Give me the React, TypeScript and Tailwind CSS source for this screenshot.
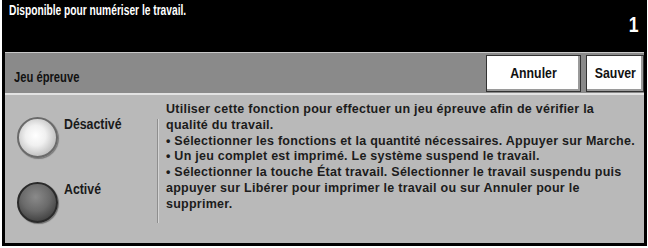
import React from "react";

const sans = "font-['Liberation_Sans',Arial,sans-serif]";

function Radio({ on, label }: { on: boolean; label: string }) {
  return (
    <div className="flex items-start gap-[6px]">
      <div
        className={
          on
            ? "w-[41px] h-[41px] rounded-full border-[2px] border-[#2a2a2a] bg-[radial-gradient(circle_at_45%_35%,#8a8a8a,#6a6a6a_45%,#3a3a3a_85%)] shadow-[1px_1px_1px_rgba(0,0,0,0.4)]"
            : "w-[41px] h-[41px] rounded-full border-[2px] border-[#6a6a6a] bg-[radial-gradient(circle_at_45%_45%,#ffffff,#f0f0f0_35%,#c4c4c4_70%,#8c8c8c)] shadow-[1px_1px_1px_rgba(0,0,0,0.35)]"
        }
      />
      <span className={`${sans} inline-block origin-left scale-x-[0.88] text-[14px] font-bold text-[#1a1a1a] leading-none`}>
        {label}
      </span>
    </div>
  );
}

function Btn({ label, w }: { label: string; w: string }) {
  return (
    <button
      className={`${w} h-[37px] bg-white border border-[#333] shadow-[inset_-2px_-2px_0_#9a9a9a,inset_2px_2px_0_#ffffff] ${sans} text-[14px] font-bold text-[#111]`}
    >
      <span className="inline-block scale-x-[0.88]">{label}</span>
    </button>
  );
}

export default function App() {
  return (
    <div className="w-[648px] h-[248px] bg-white">
      <div className="ml-[2px] w-[645px] h-[246px] flex flex-col border-l-[3px] border-r-[3px] border-b-[3px] border-black bg-black">
        <div className="h-[52px] flex justify-between px-[4px]">
          <span className={`${sans} inline-block origin-top-left scale-x-[0.73] text-white text-[14px] font-bold leading-none pt-[3px]`}>
            Disponible pour numériser le travail.
          </span>
          <span className={`${sans} inline-block origin-top-right scale-x-[0.8] text-white text-[22px] font-bold leading-none pt-[14px] pr-[2px]`}>
            1
          </span>
        </div>
        <div className="h-[1px] bg-[#c8c8c8]" />
        <div className="h-[40px] bg-[#8a8a8a] flex items-center justify-between pl-[9px]">
          <span className={`${sans} inline-block origin-left scale-x-[0.8] text-[14px] font-bold text-[#111] mt-[8px]`}>
            Jeu épreuve
          </span>
          <div className="flex gap-[5px] self-stretch items-center">
            <Btn label="Annuler" w="w-[95px]" />
            <Btn label="Sauver" w="w-[58px]" />
          </div>
        </div>
        <div className="h-[2px] bg-[#e2e2e2]" />
        <div className="flex-1 bg-[#b9b9b9] flex">
          <div className="w-[152px] flex flex-col gap-[24px] pl-[12px] pt-[22px]">
            <Radio on={false} label="Désactivé" />
            <Radio on={true} label="Activé" />
          </div>
          <div className="mt-[24px] h-[104px] w-[2px] border-l border-[#8e8e8e] bg-[#d4d4d4]" />
          <div className={`pl-[7px] pt-[7px] ${sans} text-[12.5px] tracking-[0.25px] font-bold leading-[15.8px] text-[#1c1c1c] whitespace-nowrap`}>
            Utiliser cette fonction pour effectuer un jeu épreuve afin de vérifier la
            <br />
            qualité du travail.
            <br />
            • Sélectionner les fonctions et la quantité nécessaires. Appuyer sur Marche.
            <br />
            • Un jeu complet est imprimé. Le système suspend le travail.
            <br />
            • Sélectionner la touche État travail. Sélectionner le travail suspendu puis
            <br />
            appuyer sur Libérer pour imprimer le travail ou sur Annuler pour le
            <br />
            supprimer.
          </div>
        </div>
      </div>
    </div>
  );
}
